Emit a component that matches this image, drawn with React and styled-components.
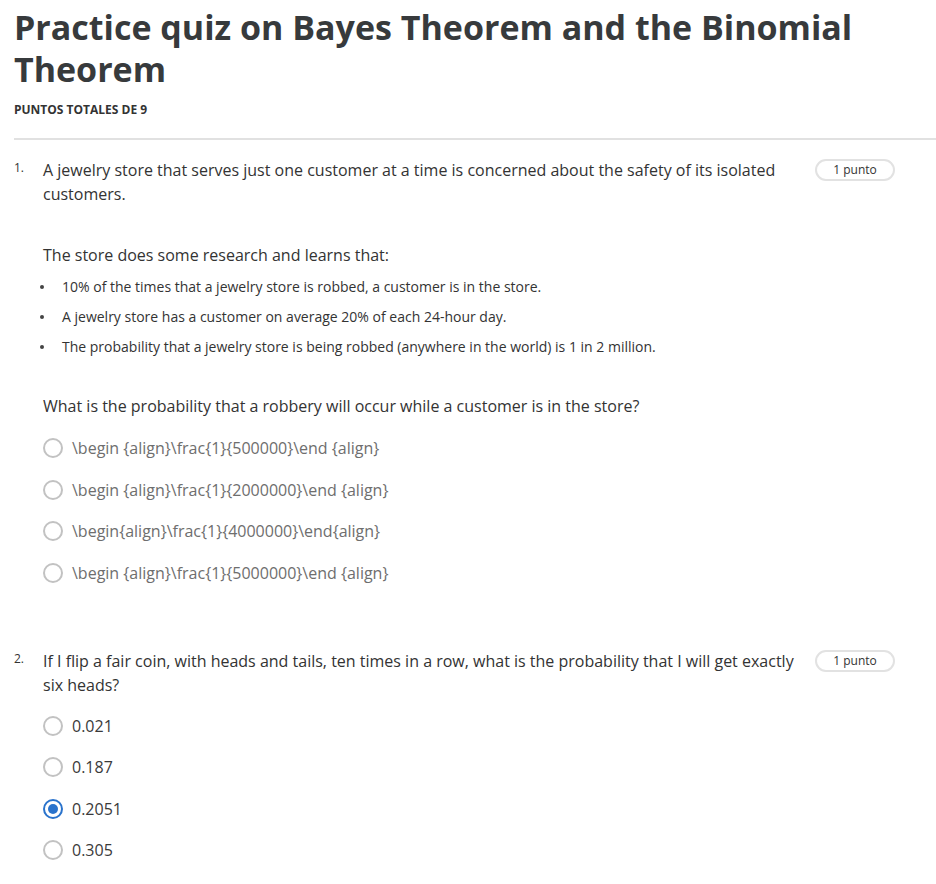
import React from 'react';
import styled, { createGlobalStyle } from 'styled-components';

const GlobalStyle = createGlobalStyle`
  body {
    margin: 0;
    background: #fff;
    font-family: "Open Sans", "Liberation Sans", sans-serif;
    color: #333;
  }
`;

const Page = styled.div`
  padding: 6px 0 40px 14px;
`;

const Title = styled.h1`
  margin: 0;
  font-size: 34px;
  line-height: 42px;
  font-weight: 700;
  color: #373a3c;
`;

const TotalPoints = styled.div`
  margin-top: 12px;
  font-size: 12px;
  line-height: 16px;
  font-weight: 700;
  color: #333;
`;

const Divider = styled.hr`
  margin: 20px 0 18px;
  border: none;
  border-top: 2px solid #e1e1e1;
`;

const Question = styled.div`
  display: flex;
  align-items: flex-start;
  margin-top: ${p => p.gap || 0}px;
`;

const Number = styled.div`
  width: 29px;
  flex: none;
  font-size: 12px;
  line-height: 20px;
  color: #333;
`;

const Body = styled.div`
  width: 760px;
  flex: none;
`;

const Prompt = styled.div`
  font-size: 16px;
  line-height: 24px;
  color: #333;
  margin-top: ${p => p.gap || 0}px;
`;

const Facts = styled.ul`
  margin: 10px 0 0 -3px;
  padding: 0;
  list-style: none;
`;

const Fact = styled.li`
  display: flex;
  align-items: center;
  gap: 18px;
  font-size: 14px;
  line-height: 20px;
  color: #333;
  &::before {
    content: '';
    width: 4px;
    height: 4px;
    flex: none;
    border-radius: 50%;
    background: #444;
  }
  & + & {
    margin-top: 10px;
  }
`;

const Options = styled.div`
  display: flex;
  flex-direction: column;
  gap: ${p => p.spacing}px;
  margin-top: ${p => p.gap}px;
`;

const Option = styled.label`
  display: flex;
  align-items: center;
  gap: 9px;
  height: 24px;
  font-size: 16px;
  color: ${p => (p.muted ? '#6e6e6e' : '#3a3a3a')};
`;

const Radio = styled.span`
  box-sizing: border-box;
  width: 20px;
  height: 20px;
  flex: none;
  border-radius: 50%;
  border: 2px solid ${p => (p.checked ? '#2a73cc' : '#c2c2c2')};
  display: flex;
  align-items: center;
  justify-content: center;
  &::after {
    content: '';
    display: ${p => (p.checked ? 'block' : 'none')};
    width: 10px;
    height: 10px;
    border-radius: 50%;
    background: #2a73cc;
  }
`;

const Points = styled.div`
  margin: 1px 0 0 12px;
  box-sizing: border-box;
  width: 80px;
  height: 22px;
  flex: none;
  border: 2px solid #e2e2e2;
  border-radius: 12px;
  font-size: 12px;
  line-height: 18px;
  text-align: center;
  color: #333;
`;

const q1Options = [
  '\\begin {align}\\frac{1}{500000}\\end {align}',
  '\\begin {align}\\frac{1}{2000000}\\end {align}',
  '\\begin{align}\\frac{1}{4000000}\\end{align}',
  '\\begin {align}\\frac{1}{5000000}\\end {align}',
];

const q2Options = ['0.021', '0.187', '0.2051', '0.305'];

export default function App() {
  return (
    <Page>
      <GlobalStyle />
      <Title>Practice quiz on Bayes Theorem and the Binomial Theorem</Title>
      <TotalPoints>PUNTOS TOTALES DE 9</TotalPoints>
      <Divider />

      <Question>
        <Number>1.</Number>
        <Body>
          <Prompt>
            A jewelry store that serves just one customer at a time is concerned about the safety of its isolated customers.
          </Prompt>
          <Prompt gap={37}>The store does some research and learns that:</Prompt>
          <Facts>
            <Fact>10% of the times that a jewelry store is robbed, a customer is in the store.</Fact>
            <Fact>A jewelry store has a customer on average 20% of each 24-hour day.</Fact>
            <Fact>The probability that a jewelry store is being robbed (anywhere in the world) is 1 in 2 million.</Fact>
          </Facts>
          <Prompt gap={37}>What is the probability that a robbery will occur while a customer is in the store?</Prompt>
          <Options gap={18} spacing={17.7}>
            {q1Options.map(o => (
              <Option key={o} muted>
                <Radio />
                {o}
              </Option>
            ))}
          </Options>
        </Body>
        <Points>1 punto</Points>
      </Question>

      <Question gap={64}>
        <Number>2.</Number>
        <Body>
          <Prompt>
            If I flip a fair coin, with heads and tails, ten times in a row, what is the probability that I will get exactly six heads?
          </Prompt>
          <Options gap={17} spacing={17.3}>
            {q2Options.map(o => (
              <Option key={o}>
                <Radio checked={o === '0.2051'} />
                {o}
              </Option>
            ))}
          </Options>
        </Body>
        <Points>1 punto</Points>
      </Question>
    </Page>
  );
}
